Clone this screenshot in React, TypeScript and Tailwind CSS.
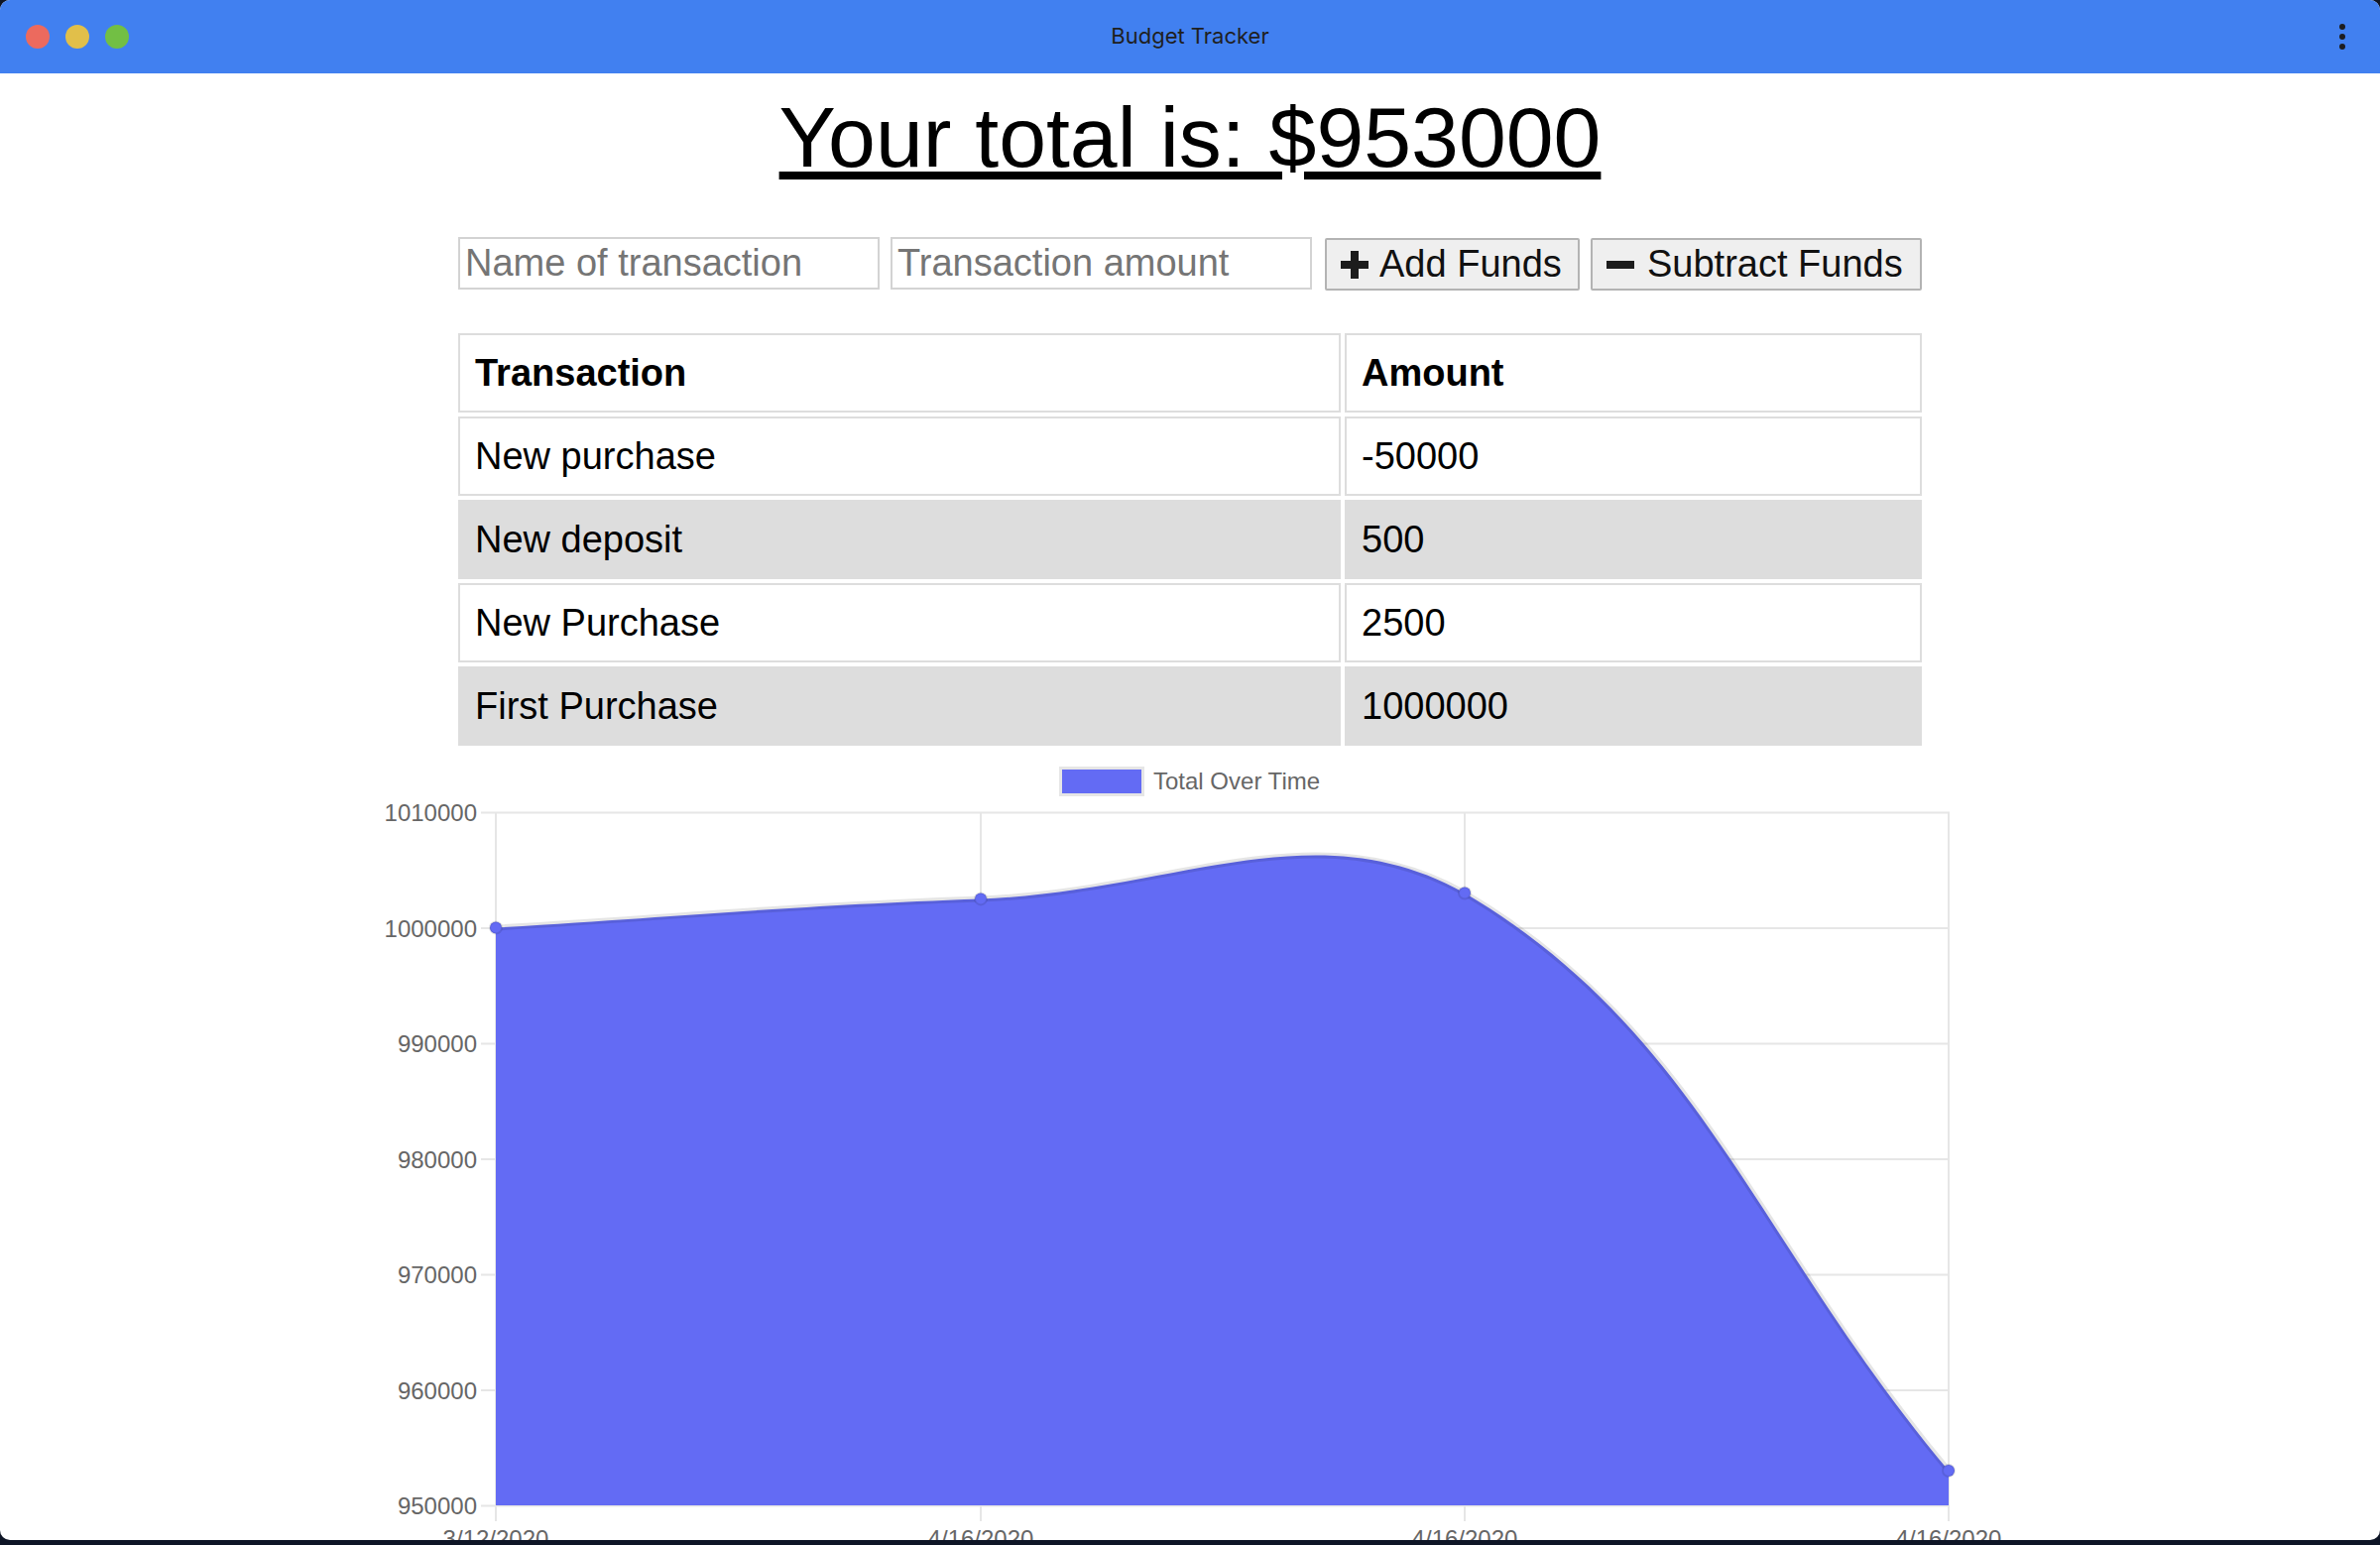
import React from "react";

interface Transaction {
  name: string;
  amount: string;
}

const transactions: Transaction[] = [
  { name: "New purchase", amount: "-50000" },
  { name: "New deposit", amount: "500" },
  { name: "New Purchase", amount: "2500" },
  { name: "First Purchase", amount: "1000000" },
];

// chart geometry, page pixels
const yTicks = ["1010000", "1000000", "990000", "980000", "970000", "960000", "950000"];
const xTicks = [
  { label: "3/12/2020", x: 500 },
  { label: "4/16/2020", x: 989 },
  { label: "4/16/2020", x: 1477 },
  { label: "4/16/2020", x: 1965 },
];
const points = [
  [500, 935.5],
  [989, 906.4],
  [1477, 900.5],
  [1965, 1483],
];
const curve = "M500 935.5 C695.6 923.9 793.2 913.4 989 906.4 C1184 899.4 1324 815 1477 900.5 C1714.7 1040.9 1769.8 1250 1965 1483";

const TotalChart = () => {
  return (
    <svg width={2400} height={820} viewBox="0 757 2400 820" className="block shrink-0 mt-[1px]">
      {/* legend */}
      <rect x={1068} y={773} width={86} height={30} fill="#e6e6e6" />
      <rect x={1071} y={776} width={80} height={24} fill="#636bf4" />
      <text x={1163} y={796} fontSize={24} fill="#666" fontFamily="'Liberation Sans', Arial, sans-serif">
        Total Over Time
      </text>

      {/* grid */}
      {yTicks.map((label, i) => {
        const y = 819.5 + 116.5 * i;
        return (
          <g key={label}>
            <line x1={485} x2={1966} y1={y} y2={y} stroke="#e6e6e6" strokeWidth={2} />
            <text x={481} y={y + 8.5} fontSize={24} fill="#666" textAnchor="end" fontFamily="'Liberation Sans', Arial, sans-serif">
              {label}
            </text>
          </g>
        );
      })}
      {xTicks.map((t, i) => (
        <g key={i}>
          <line x1={t.x} x2={t.x} y1={819} y2={1534} stroke="#e6e6e6" strokeWidth={2} />
          <text x={t.x} y={1560} fontSize={24} fill="#666" textAnchor="middle" fontFamily="'Liberation Sans', Arial, sans-serif">
            {t.label}
          </text>
        </g>
      ))}

      {/* area */}
      <path d={`${curve} L1965 1518 L500 1518 Z`} fill="#636bf4" />
      <path d={curve} fill="none" stroke="rgba(0,0,0,0.1)" strokeWidth={6} />
      {points.map(([x, y], i) => (
        <circle key={i} cx={x} cy={y} r={6} fill="#636bf4" stroke="rgba(0,0,0,0.1)" strokeWidth={2} />
      ))}
    </svg>
  );
};

const PlusIcon = () => (
  <svg width="30" height="30" viewBox="0 0 30 30" className="shrink-0">
    <path d="M11 1h8v10h10v8H19v10h-8V19H1v-8h10z" fill="#1c1c1c" />
  </svg>
);

const MinusIcon = () => (
  <svg width="30" height="30" viewBox="0 0 30 30" className="shrink-0">
    <rect x="1" y="11" width="28" height="8" fill="#1c1c1c" />
  </svg>
);

export default function App() {
  return (
    <div className="w-[2400px] h-[1558px] bg-[#0e1526]">
      <div className="h-[1553px] rounded-[10px] overflow-hidden bg-white flex flex-col">
        {/* window title bar */}
        <div className="h-[74px] shrink-0 bg-[#4180f0] grid grid-cols-[1fr_auto_1fr] items-center">
          <div className="flex items-center gap-4 pl-[26px]">
            <span className="w-6 h-6 rounded-full bg-[#ec6a5e]" />
            <span className="w-6 h-6 rounded-full bg-[#e1bf4a]" />
            <span className="w-6 h-6 rounded-full bg-[#72bf44]" />
          </div>
          <div className="text-[22px] text-[#1f1f1f] font-['Inter',sans-serif] -mt-[2px]">Budget Tracker</div>
          <div className="flex flex-col items-end gap-1 pr-[35px]">
            <span className="w-[6px] h-[6px] rounded-full bg-[#1d1d1f]" />
            <span className="w-[6px] h-[6px] rounded-full bg-[#1d1d1f]" />
            <span className="w-[6px] h-[6px] rounded-full bg-[#1d1d1f]" />
          </div>
        </div>

        {/* page */}
        <div className="flex flex-col items-center text-black font-['Liberation_Sans',Arial,sans-serif]">
          <h1 className="mt-[21px] text-[86px] leading-[86px] underline">Your total is: $953000</h1>

          <form className="mt-[58px] flex items-start" onSubmit={(e) => e.preventDefault()}>
            <input
              type="text"
              placeholder="Name of transaction"
              className="w-[425px] h-[53px] mr-[11px] pl-[5px] text-[38px] border-2 border-[#d3d3d3] bg-white outline-none placeholder:text-[#757575]"
            />
            <input
              type="number"
              placeholder="Transaction amount"
              className="w-[425px] h-[53px] mr-[13px] pl-[5px] text-[38px] border-2 border-[#d3d3d3] bg-white outline-none placeholder:text-[#757575]"
            />
            <button
              type="button"
              className="w-[257px] h-[53px] mt-[1px] mr-[11px] pl-[13px] flex items-center gap-[10px] text-[38px] text-[#111] bg-[#efefef] border-2 border-[#b3b3b3] rounded-[2px]">
              <PlusIcon />
              Add Funds
            </button>
            <button
              type="button"
              className="w-[334px] h-[53px] mt-[1px] pl-[13px] flex items-center gap-[12px] text-[38px] text-[#111] bg-[#efefef] border-2 border-[#b3b3b3] rounded-[2px]">
              <MinusIcon />
              Subtract Funds
            </button>
          </form>

          <table className="mt-[39px] w-[1484px] border-separate border-spacing-1 text-[38px] text-left">
            <thead>
              <tr>
                <th className="w-[890px] h-[80px] px-[15px] border-2 border-[#dddddd] font-bold">Transaction</th>
                <th className="h-[80px] px-[15px] border-2 border-[#dddddd] font-bold">Amount</th>
              </tr>
            </thead>
            <tbody>
              {transactions.map((t, i) => (
                <tr key={i} className={i % 2 === 1 ? "bg-[#dddddd]" : ""}>
                  <td className="h-[80px] px-[15px] border-2 border-[#dddddd]">{t.name}</td>
                  <td className="h-[80px] px-[15px] border-2 border-[#dddddd]">{t.amount}</td>
                </tr>
              ))}
            </tbody>
          </table>

          <TotalChart />
        </div>
      </div>
    </div>
  );
}
